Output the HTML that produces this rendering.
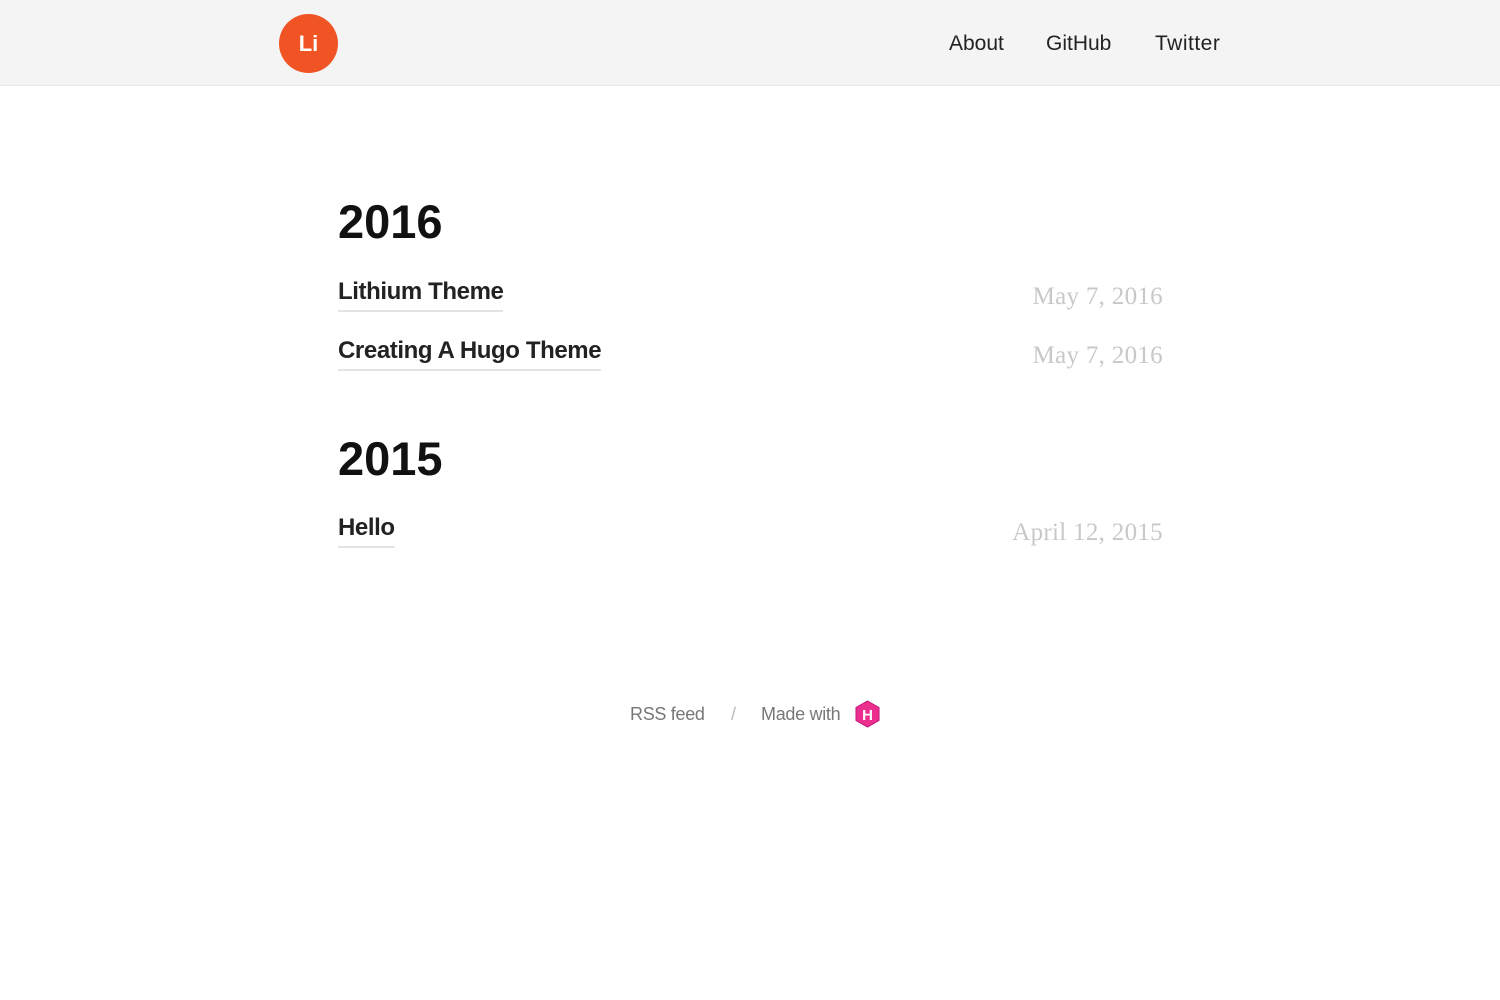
<!DOCTYPE html>
<html><head><meta charset="utf-8"><style>
body{margin:0;background:#fff;font-family:"Liberation Sans",sans-serif;width:1500px;height:1000px;overflow:hidden;}
.hdr{height:85px;background:#f4f4f4;border-bottom:1px solid #e6e6e6;position:relative;}
.logo{position:absolute;left:279px;top:14px;width:59px;height:59px;border-radius:50%;background:#f15424;color:#fff;font-weight:bold;font-size:22px;text-align:center;line-height:59px;}
.nav{position:absolute;top:32px;font-size:21px;color:#222;}
h2{position:absolute;left:338px;margin:0;font-size:47px;font-weight:bold;color:#111;letter-spacing:0px;}
.t{position:absolute;left:338px;font-size:24px;font-weight:bold;color:#222;border-bottom:2px solid #e4e4e4;padding-bottom:4px;letter-spacing:-0.4px;}
.d{position:absolute;right:337px;font-family:"Liberation Serif",serif;font-size:25px;color:#c8c8c8;letter-spacing:0.3px;}
.f{position:absolute;top:704px;font-size:18px;color:#777;letter-spacing:-0.3px;}
</style></head><body>
<div class="hdr"><div class="logo">Li</div>
<span class="nav" style="left:949px">About</span>
<span class="nav" style="left:1046px">GitHub</span>
<span class="nav" style="left:1155px;letter-spacing:0.5px">Twitter</span></div>
<h2 style="top:194px">2016</h2>
<div class="t" style="top:278px">Lithium Theme</div><div class="d" style="top:283px">May 7, 2016</div>
<div class="t" style="top:337px">Creating A Hugo Theme</div><div class="d" style="top:342px">May 7, 2016</div>
<h2 style="top:431px">2015</h2>
<div class="t" style="top:514px">Hello</div><div class="d" style="top:519px">April 12, 2015</div>
<span class="f" style="left:630px">RSS feed</span>
<span class="f" style="left:731px;color:#bbb">/</span>
<span class="f" style="left:761px">Made with</span>
<svg style="position:absolute;left:855px;top:700px" width="25" height="28" viewBox="0 0 25 28"><polygon points="12.5,1 24,7.5 24,20.5 12.5,27 1,20.5 1,7.5" fill="#ec2e8f" stroke="#c0127a" stroke-width="1"/><text x="12.5" y="20" text-anchor="middle" font-family="Liberation Sans" font-weight="bold" font-size="15" fill="#fff">H</text></svg>
</body></html>
